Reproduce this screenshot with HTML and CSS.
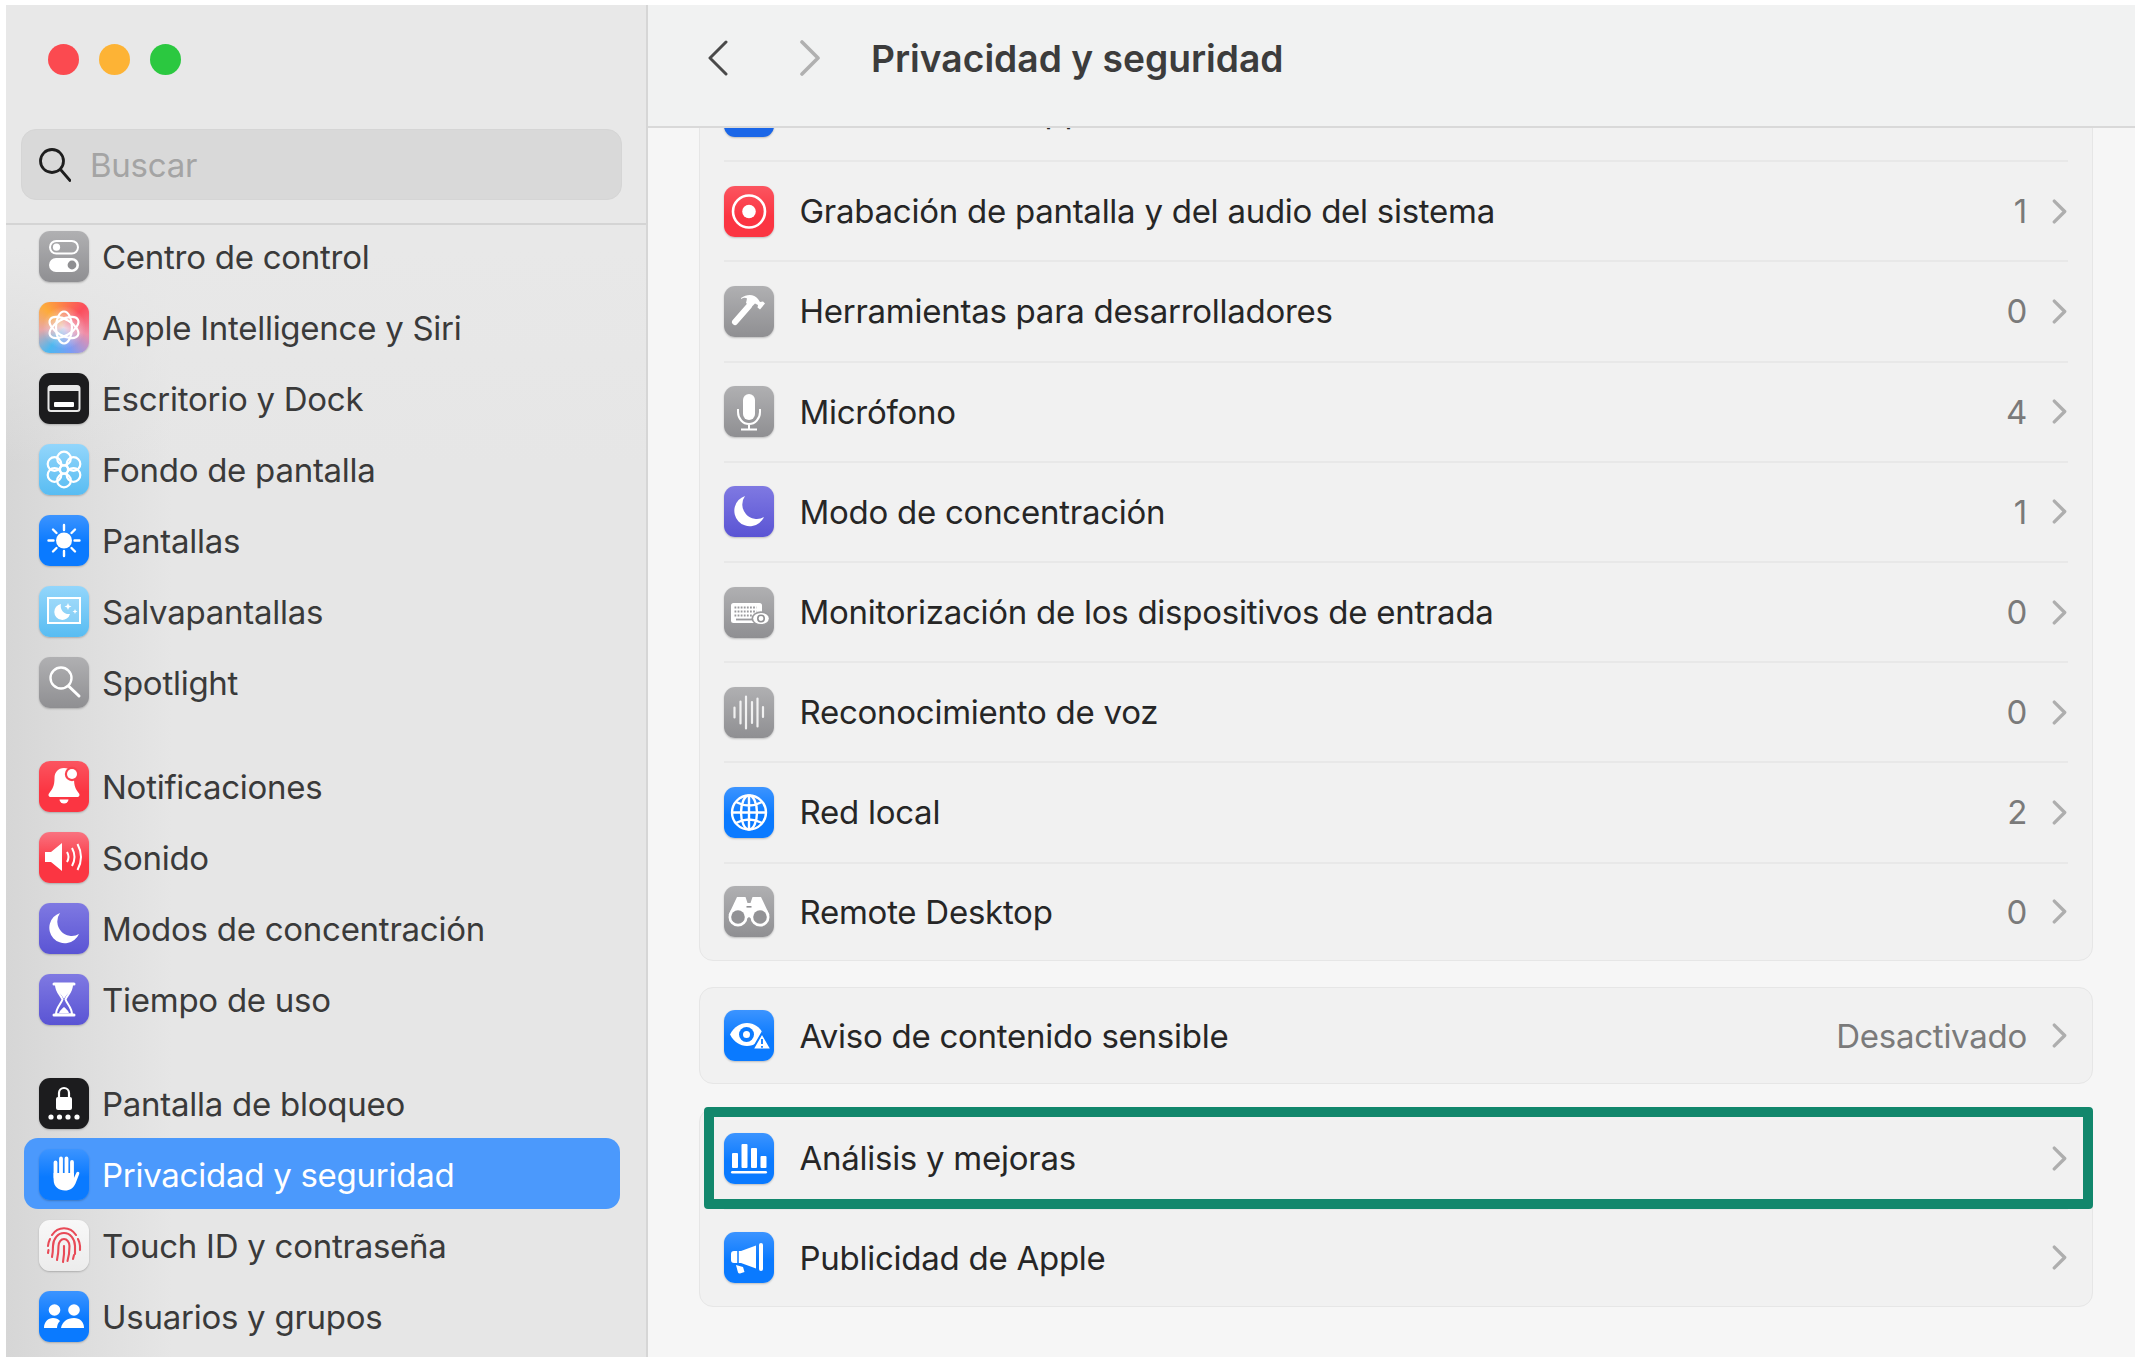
FILE: index.html
```html
<!DOCTYPE html>
<html lang="es">
<head>
<meta charset="utf-8">
<title>Privacidad y seguridad</title>
<link rel="stylesheet" href="styles.css">
</head>
<body>
<div class="window">
  <aside class="sidebar">
    <div class="lights"><span class="light red"></span><span class="light amber"></span><span class="light green"></span></div>
    <div class="search">
      <svg class="search-icon" viewBox="0 0 32 34"><circle cx="13" cy="13" r="11.5"/><path d="M21.5 21.5L31 32.5"/></svg>
      <span>Buscar</span>
    </div>
    <div class="side-view">
      <div class="side-list">
        <div class="group">
          <div class="side-row"><div class="tile t-gray"><svg viewBox="0 0 50 51"><rect x="11" y="10" width="28" height="12.5" rx="6.2" fill="none" stroke="#fff" stroke-width="2"/><circle cx="17.5" cy="16.2" r="3.6" fill="#fff"/><rect x="10" y="27" width="30" height="14" rx="7" fill="#fff"/><circle cx="33" cy="34" r="4.4" fill="#8f8f92"/></svg></div><span>Centro de control</span></div>
          <div class="side-row"><div class="tile t-ai"><svg viewBox="0 0 50 51"><g fill="none" stroke="#fff" stroke-width="2.200"><ellipse cx="25" cy="25.5" rx="8" ry="16"/><ellipse cx="25" cy="25.5" rx="8" ry="16" transform="rotate(60 25 25.5)"/><ellipse cx="25" cy="25.5" rx="8" ry="16" transform="rotate(120 25 25.5)"/></g></svg></div><span>Apple Intelligence y Siri</span></div>
          <div class="side-row"><div class="tile t-black"><svg viewBox="0 0 50 51"><rect x="9.500" y="13" width="31" height="25" rx="2.500" fill="none" stroke="#e8e8e8" stroke-width="2"/><rect x="10" y="14" width="30" height="4" fill="#e8e8e8"/><rect x="15" y="29" width="20" height="5" rx="1" fill="#fff"/></svg></div><span>Escritorio y Dock</span></div>
          <div class="side-row"><div class="tile t-sky"><svg viewBox="0 0 50 51"><g fill="none" stroke="#fff" stroke-width="2.200"><circle cx="25" cy="25.500" r="4"/><circle cx="25" cy="14.500" r="6.800"/><circle cx="25" cy="36.500" r="6.800"/><circle cx="15.500" cy="20" r="6.800"/><circle cx="34.500" cy="20" r="6.800"/><circle cx="15.500" cy="31" r="6.800"/><circle cx="34.500" cy="31" r="6.800"/></g></svg></div><span>Fondo de pantalla</span></div>
          <div class="side-row"><div class="tile t-blue"><svg viewBox="0 0 50 51"><circle cx="25" cy="25.500" r="8" fill="#fff"/><path d="M25 10v5M25 36v5M9.500 25.500h5M35.500 25.500h5M14 14.500l3.500 3.500M32.500 33l3.500 3.500M36 14.500L32.500 18M17.500 33L14 36.500" stroke="#fff" stroke-width="2.400" stroke-linecap="round"/></svg></div><span>Pantallas</span></div>
          <div class="side-row"><div class="tile t-sky"><svg viewBox="0 0 50 51"><rect x="9" y="12" width="32" height="25" fill="#ffffff30" stroke="#fff" stroke-width="2"/><path d="M22 18A8 8 0 1 0 31 28A8 8 0 0 1 22 18Z" fill="#fff"/><path d="M29 17l1 2.500 2.500 1-2.500 1-1 2.500-1-2.500-2.500-1 2.500-1zM36 23l.7 1.800 1.800.7-1.800.7-.7 1.800-.7-1.800-1.800-.7 1.800-.7z" fill="#fff"/></svg></div><span>Salvapantallas</span></div>
          <div class="side-row"><div class="tile t-gray"><svg viewBox="0 0 50 51"><circle cx="22" cy="21" r="10.500" fill="none" stroke="#fff" stroke-width="2.400"/><path d="M29.500 29L40 39" stroke="#fff" stroke-width="3" stroke-linecap="round"/></svg></div><span>Spotlight</span></div>
        </div>
        <div class="group">
          <div class="side-row"><div class="tile t-red"><svg viewBox="0 0 50 51"><path d="M25 7c-6 0-9.500 4.500-9.500 10 0 8-2 11-5.500 15.500-1 1.500-.5 3.500 2 3.500h26c2.500 0 3-2 2-3.500C36.500 28 35 25 35 17c0-5.500-4-10-10-10z" fill="#fff"/><path d="M20.500 38.500h9a4.500 4 0 0 1-9 0z" fill="#fff"/><circle cx="33" cy="13" r="7.200" fill="#f9434f"/><circle cx="33" cy="13" r="5" fill="#fff"/></svg></div><span>Notificaciones</span></div>
          <div class="side-row"><div class="tile t-red2"><svg viewBox="0 0 50 51"><path d="M6 20h6l11-9v28l-11-9H6z" fill="#fff"/><path d="M28 20q3 5 0 10M33 16q5 9 0 18M38.500 12q7 13 0 26" fill="none" stroke="#fff" stroke-width="2"/></svg></div><span>Sonido</span></div>
          <div class="side-row"><div class="tile t-purple"><svg viewBox="0 0 50 51"><path d="M21 10A15.500 15.500 0 1 0 40 31A14.500 14.500 0 0 1 21 10Z" fill="#fff"/></svg></div><span>Modos de concentración</span></div>
          <div class="side-row"><div class="tile t-purple"><svg viewBox="0 0 50 51"><path d="M15 10h20M15 41h20" stroke="#fff" stroke-width="3" stroke-linecap="round"/><path d="M17 11h16c0 7-5 10-6.500 14.500 1.500 4.500 6.500 8 6.500 15H17c0-7 5-10.500 6.500-15C22 21 17 18 17 11z" fill="none" stroke="#fff" stroke-width="2"/><path d="M17 11h16c0 7-5 8-8 14-3-6-8-7-8-14z" fill="#fff"/><path d="M20 39c1-3 3-4 5-6 2 2 4 3 5 6z" fill="#fff"/></svg></div><span>Tiempo de uso</span></div>
        </div>
        <div class="group">
          <div class="side-row"><div class="tile t-black"><svg viewBox="0 0 50 51"><rect x="17" y="19" width="16" height="13" rx="2" fill="#fff"/><path d="M20 20v-5a5 5 0 0 1 10 0v5" fill="none" stroke="#fff" stroke-width="2.200"/><g fill="#fff"><circle cx="12" cy="39" r="2.600"/><circle cx="20.500" cy="39" r="2.600"/><circle cx="29" cy="39" r="2.600"/><circle cx="38" cy="39" r="2.600"/></g></svg></div><span>Pantalla de bloqueo</span></div>
          <div class="side-row selected"><div class="tile t-blue"><svg viewBox="0 0 50 51"><path d="M16.500 13.500v15M22 9.500v15M27.500 9.500v15M33 13v15" stroke="#fff" stroke-width="3.800" stroke-linecap="round"/><path d="M14.600 24h20.300v5l2.600-5.500c1-1.500 3.500-.5 2.700 1.500l-3.700 9.500C34.500 39 31 41.500 26 41.500c-6 0-11.400-3.500-11.400-11z" fill="#fff"/></svg></div><span>Privacidad y seguridad</span></div>
          <div class="side-row"><div class="tile t-white"><svg viewBox="0 0 50 51"><g fill="none" stroke="#e84a57" stroke-width="2.100" stroke-linecap="round"><path d="M13 15a15 17 0 0 1 24 0"/><path d="M9 26a16 18 0 0 1 2-7M41 30v-4a16 18 0 0 0-2-7"/><path d="M13 37q1-5 1-11a11 13 0 0 1 22 0v8"/><path d="M18 40q1.500-7 1.500-14a5.500 7 0 0 1 11 0q0 8-2 15"/><path d="M24 42q1.500-8 1-16"/><path d="M34 39l1-4"/><path d="M9 33l.5-3"/></g></svg></div><span>Touch ID y contraseña</span></div>
          <div class="side-row"><div class="tile t-blue"><svg viewBox="0 0 50 51"><circle cx="15.500" cy="19" r="5.800" fill="#fff"/><circle cx="35" cy="19" r="5.800" fill="#fff"/><path d="M5 37c0-6 4-10 9-10 3 0 5.500 1 7 3-2 2-3 4.500-3 7z" fill="#fff"/><path d="M45 37c0-6-4-10-10-10-7 0-12 4-13 10z" fill="#fff"/></svg></div><span>Usuarios y grupos</span></div>
        </div>
      </div>
    </div>
  </aside>

  <main class="pane">
    <header class="topbar">
      <svg class="nav back" viewBox="0 0 21 36"><path d="M19 2L3 18l16 16"/></svg>
      <svg class="nav forward" viewBox="0 0 21 36"><path d="M2 2l16 16L2 34"/></svg>
      <h1>Privacidad y seguridad</h1>
    </header>
    <div class="content">
      <section class="card first">
        <div class="row"><div class="tile t-deep"></div><span class="label">Gestión de las apps</span><svg class="chev" viewBox="0 0 14 24"><path d="M2 2l10 10L2 22"/></svg></div>
        <div class="row"><div class="tile t-red"><svg viewBox="0 0 50 51"><circle cx="25" cy="25.500" r="16" fill="none" stroke="#fff" stroke-width="2.600"/><circle cx="25" cy="25.500" r="6.800" fill="#fff"/></svg></div><span class="label">Grabación de pantalla y del audio del sistema</span><span class="value">1</span><svg class="chev" viewBox="0 0 14 24"><path d="M2 2l10 10L2 22"/></svg></div>
        <div class="row"><div class="tile t-gray"><svg viewBox="0 0 50 51"><path d="M11 36l14-16" stroke="#fff" stroke-width="6" stroke-linecap="round"/><path d="M17 12c6-4 13-4 17 1l2 3 3-.5 2 2-5 6-2.500-2 .5-2.500-3-1.500-4 4-5-4.500 1-4.500c-1.500-1-3.500-.8-6 .5z" fill="#fff"/></svg></div><span class="label">Herramientas para desarrolladores</span><span class="value">0</span><svg class="chev" viewBox="0 0 14 24"><path d="M2 2l10 10L2 22"/></svg></div>
        <div class="row"><div class="tile t-gray"><svg viewBox="0 0 50 51"><rect x="19" y="8" width="12" height="26" rx="6" fill="#fff"/><path d="M14 23v3a11 12 0 0 0 22 0v-3M25 38v5M17 43.500h16" fill="none" stroke="#fff" stroke-width="2"/></svg></div><span class="label">Micrófono</span><span class="value">4</span><svg class="chev" viewBox="0 0 14 24"><path d="M2 2l10 10L2 22"/></svg></div>
        <div class="row"><div class="tile t-purple"><svg viewBox="0 0 50 51"><path d="M21 10A15.500 15.500 0 1 0 40 31A14.500 14.500 0 0 1 21 10Z" fill="#fff"/></svg></div><span class="label">Modo de concentración</span><span class="value">1</span><svg class="chev" viewBox="0 0 14 24"><path d="M2 2l10 10L2 22"/></svg></div>
        <div class="row"><div class="tile t-gray"><svg viewBox="0 0 50 51"><rect x="7" y="16" width="31" height="20" rx="2.500" fill="#fff"/><path d="M10.500 20.500h22M10.500 24.500h22M10.500 28.500h19" stroke="#9a9a9d" stroke-width="1.800" stroke-dasharray="1.800 1.300"/><path d="M12 32.500h16" stroke="#9a9a9d" stroke-width="1.800"/><ellipse cx="37" cy="31.500" rx="9.500" ry="7.200" fill="#9a9a9d"/><ellipse cx="37" cy="31.500" rx="7.800" ry="5.600" fill="#fff"/><circle cx="37" cy="31.500" r="3.200" fill="none" stroke="#8f8f92" stroke-width="1.600"/></svg></div><span class="label">Monitorización de los dispositivos de entrada</span><span class="value">0</span><svg class="chev" viewBox="0 0 14 24"><path d="M2 2l10 10L2 22"/></svg></div>
        <div class="row"><div class="tile t-gray"><svg viewBox="0 0 50 51"><path d="M10.500 20.500v10M16.500 14.500v22M22 9.500v32M28 15v21M33.500 11.500v28M39 20v10" stroke="#fff" stroke-opacity=".85" stroke-width="2.200" stroke-linecap="round"/></svg></div><span class="label">Reconocimiento de voz</span><span class="value">0</span><svg class="chev" viewBox="0 0 14 24"><path d="M2 2l10 10L2 22"/></svg></div>
        <div class="row"><div class="tile t-blue"><svg viewBox="0 0 50 51"><g fill="none" stroke="#fff" stroke-width="2.400"><circle cx="25" cy="25.500" r="17"/><ellipse cx="25" cy="25.500" rx="8" ry="17"/><path d="M25 8.500v34M8 25.500h34M12 15q13 7 26 0M12 36q13-7 26 0"/></g></svg></div><span class="label">Red local</span><span class="value">2</span><svg class="chev" viewBox="0 0 14 24"><path d="M2 2l10 10L2 22"/></svg></div>
        <div class="row last"><div class="tile t-gray"><svg viewBox="0 0 50 51"><path d="M13 11H21.500L23.500 17H26.500L28.500 11H37L45.500 29L36 39L25 31L14 39L4.500 29Z" fill="#fff"/><rect x="22.500" y="20" width="5" height="1.600" fill="#8f8f92"/><circle cx="14" cy="31" r="9.500" fill="#fff"/><circle cx="36" cy="31" r="9.500" fill="#fff"/><circle cx="14" cy="31" r="6.800" fill="#929295"/><circle cx="36" cy="31" r="6.800" fill="#929295"/></svg></div><span class="label">Remote Desktop</span><span class="value">0</span><svg class="chev" viewBox="0 0 14 24"><path d="M2 2l10 10L2 22"/></svg></div>
      </section>

      <section class="card single">
        <div class="row"><div class="tile t-blue"><svg viewBox="0 0 50 51"><path d="M6 24.500C10 17 16 13 23 13s13 4 16.500 11.500C36 32 30 36 23 36S10 32 6 24.500z" fill="#fff"/><circle cx="22.500" cy="24.500" r="7.500" fill="#0a7aff"/><circle cx="22.500" cy="24.500" r="3.500" fill="#fff"/><path d="M38 23l9.500 16.500h-19z" fill="#fff" stroke="#0a7aff" stroke-width="2"/><path d="M38 29v5M38 36v1.800" stroke="#0a7aff" stroke-width="1.800"/></svg></div><span class="label">Aviso de contenido sensible</span><span class="value">Desactivado</span><svg class="chev" viewBox="0 0 14 24"><path d="M2 2l10 10L2 22"/></svg></div>
      </section>

      <section class="card split">
        <div class="row"><div class="tile t-blue"><svg viewBox="0 0 50 51"><g fill="#fff"><rect x="8" y="20" width="6" height="15" rx="1"/><rect x="17.500" y="11" width="6" height="24" rx="1"/><rect x="27" y="15" width="6" height="20" rx="1"/><rect x="36.500" y="23" width="6" height="12" rx="1"/><rect x="7" y="38" width="36" height="2.400" rx="1.200"/></g></svg></div><span class="label">Análisis y mejoras</span><svg class="chev" viewBox="0 0 14 24"><path d="M2 2l10 10L2 22"/></svg></div>
        <div class="row"><div class="tile t-blue"><svg viewBox="0 0 50 51"><rect x="35" y="11" width="4" height="28" rx="2" fill="#fff"/><path d="M32 13.500v23L17 31H10a3 3 0 0 1-3-3v-6a3 3 0 0 1 3-3h7z" fill="#fff"/><path d="M12 33l7 2 1.500 5-4.500 1.500a2 2 0 0 1-2-1z" fill="#fff"/><path d="M14 19v12" stroke="#0a7aff" stroke-width="1.500"/></svg></div><span class="label">Publicidad de Apple</span><svg class="chev" viewBox="0 0 14 24"><path d="M2 2l10 10L2 22"/></svg></div>
        <div class="highlight"></div>
      </section>
    </div>
  </main>
</div>
</body>
</html>
```

FILE: styles.css
```css
* { box-sizing: border-box; }
html, body { margin: 0; height: 100%; }
body {
  background: #fff;
  padding: 5px 0 0 6px;
  overflow: hidden;
  font-family: Inter, "Liberation Sans", sans-serif;
  letter-spacing: -0.26px;
}
.window { display: flex; height: 1352px; overflow: hidden; }

/* Sidebar */
.sidebar {
  width: 642px;
  flex: none;
  border-right: 2px solid #d6d6d6;
  background:
    linear-gradient(180deg, #e8e8e8 0, #e8e8e8 18%, rgba(232,232,232,0) 34%),
    linear-gradient(90deg, #d6d6d6 0, #e6e6e6 26%);
  display: flex;
  flex-direction: column;
}
.lights { display: flex; gap: 20px; padding: 39px 0 0 42px; height: 124px; flex: none; }
.light { width: 31px; height: 31px; border-radius: 50%; }
.light.red { background: #fb4a50; }
.light.amber { background: #fdb335; }
.light.green { background: #2bc840; }
.search {
  flex: none;
  height: 71px;
  width: 601px;
  margin-left: 15px;
  border-radius: 15px;
  background: #d9d9d9;
  border: 1px solid #d5d5d5;
  display: flex;
  align-items: center;
  gap: 19px;
  padding-left: 17px;
  font-size: 33px;
  color: #a4a4a4;
}
.search-icon { width: 32px; height: 34px; fill: none; stroke: #1e1e1e; stroke-width: 2.800; stroke-linecap: round; }
.side-view {
  flex: 1;
  min-height: 0;
  margin-top: 23px;
  border-top: 2px solid #d4d4d4;
  overflow: hidden;
}
.side-list { margin-top: -5px; display: flex; flex-direction: column; gap: 33px; }
.side-row {
  height: 71px;
  margin: 0 26px 0 18px;
  padding: 2px 0 0 15px;
  display: flex;
  align-items: center;
  gap: 13px;
  border-radius: 14px;
  font-size: 33px;
  color: #3a3a3a;
}
.side-row.selected { background: #4b99fc; color: #fff; }

/* Icon tiles */
.tile {
  width: 50px;
  height: 51px;
  flex: none;
  border-radius: 11px;
  box-shadow: 0 1px 2px rgba(0,0,0,.22);
}
.tile svg { display: block; width: 50px; height: 51px; }
.t-gray { background: linear-gradient(180deg, #b0b0b2, #8f8f92); }
.t-blue { background: linear-gradient(180deg, #3c94ff, #0a7aff 55%); }
.t-deep { background: #1a66e8; }
.t-sky { background: linear-gradient(180deg, #93d6fb, #58bcf2); }
.t-red { background: linear-gradient(180deg, #fb5560, #fb3542 60%); }
.t-red2 { background: linear-gradient(180deg, #f97380, #fb3542 60%); }
.t-purple { background: linear-gradient(180deg, #7f79e2, #5a54d4); }
.t-black { background: #1c1c1e; }
.t-white { background: linear-gradient(180deg, #f8f8f8, #ececec); }
.t-ai {
  background:
    radial-gradient(circle at 50% 50%, rgba(240,225,235,.9) 0, rgba(240,225,235,0) 60%),
    conic-gradient(from 315deg, #fdab3a, #fb4d5c 25%, #ef8fa8 42%, #7a9cf5 58%, #4cb8f0 72%, #e9a6a6 86%, #fdab3a);
}

/* Main pane */
.pane { flex: 1; min-width: 0; display: flex; flex-direction: column; background: #f6f6f6; }
.topbar {
  flex: none;
  height: 123px;
  background: #f1f2f2;
  border-bottom: 2px solid #d9d9d9;
  display: flex;
  align-items: center;
  padding: 0 0 15px 59px;
  position: relative;
  z-index: 1;
}
.nav { width: 21px; height: 36px; fill: none; stroke-width: 3; stroke-linecap: round; stroke-linejoin: round; flex: none; }
.back { stroke: #4a4a4a; }
.forward { stroke: #b0b0b0; stroke-width: 3.600; margin-left: 72px; }
.topbar h1 { margin: 0 0 0 50px; font-size: 37.200px; font-weight: 600; color: #3c3c3c; letter-spacing: 0; }

.content {
  flex: 1;
  min-height: 0;
  overflow: hidden;
  padding: 0 42px 0 51px;
  display: flex;
  flex-direction: column;
}
.card {
  flex: none;
  background: #f1f1f1;
  border: 1px solid #e6e6e6;
  border-radius: 14px;
  padding: 0 24px;
  position: relative;
}
.card.first { margin-top: -69px; }
.card.single { margin-top: 26px; }
.card.split { margin-top: 24px; }
.row {
  height: 100.200px;
  display: flex;
  align-items: center;
  border-top: 2px solid #e8e8e8;
  font-size: 33px;
}
.row:first-child { border-top: 0; padding-top: 2px; }
.row.last { height: 98.500px; }
.single .row { height: 95px; padding-top: 0; }
.split .row { height: 98.500px; }
.split .row:first-child { padding-top: 0; }
.label { flex: 1; margin-left: 25.500px; color: #262626; white-space: nowrap; }
.value { color: #7a7a7a; }
.chev { width: 15px; height: 25px; margin: 0 1px 0 25px; flex: none; fill: none; stroke: #aeaeae; stroke-width: 3.200; stroke-linecap: round; stroke-linejoin: round; }
.highlight {
  position: absolute;
  left: 4px;
  right: -1px;
  top: -2px;
  height: 102px;
  border: 10px solid #12876c;
  border-radius: 4px;
}
```
